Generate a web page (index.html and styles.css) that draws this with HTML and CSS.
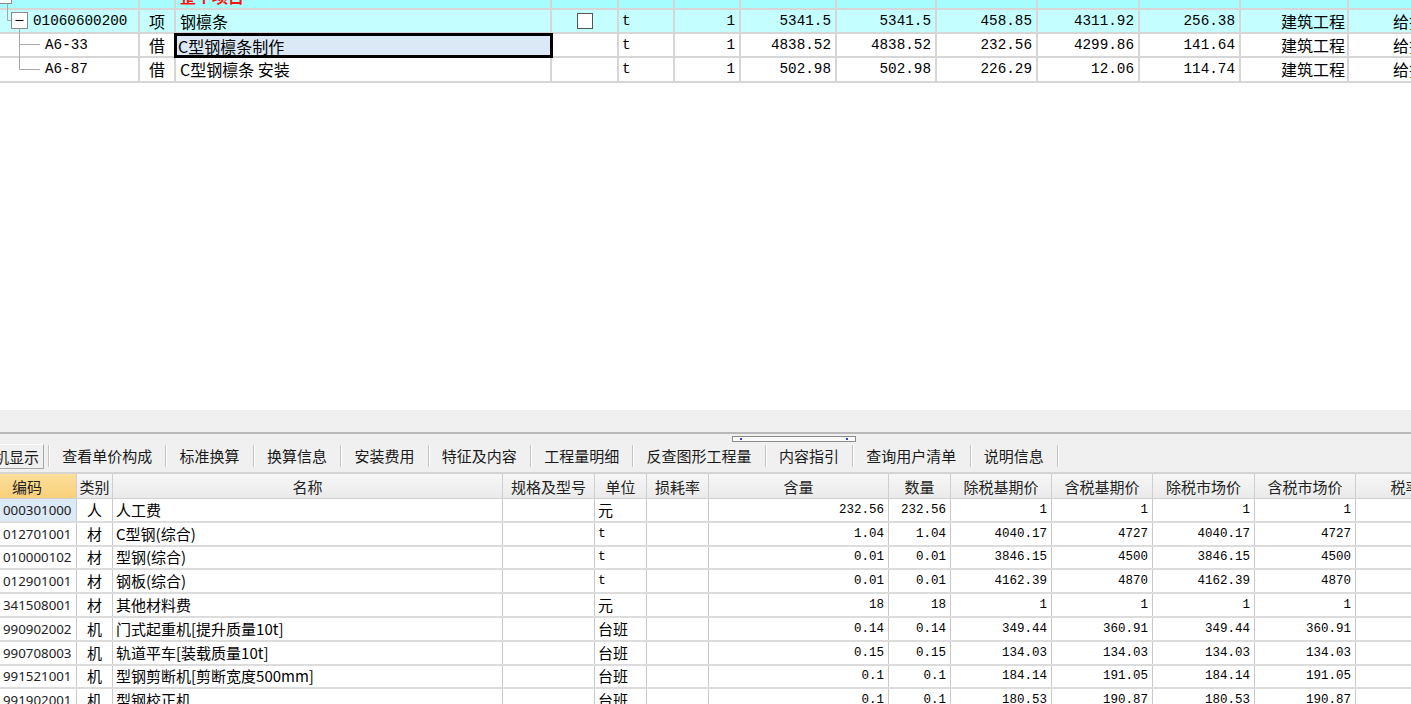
FILE: index.html
```html
<!DOCTYPE html>
<html lang="zh-CN">
<head>
<meta charset="utf-8">
<title>分部分项</title>
<link rel="stylesheet" href="styles.css">
</head>
<body>
<div class="app">
  <section class="top-pane">
    <svg class="tree" width="44" height="84" viewBox="0 0 44 84">
      <rect x="-4.5" y="-12.5" width="16" height="16" fill="#fff" stroke="#8a8a8a"/>
      <path d="M7.5 3.5V20.5H11.5" fill="none" stroke="#a8a8a8"/>
      <rect x="11.5" y="12.5" width="16" height="16" fill="#fff" stroke="#8a8a8a"/>
      <path d="M15.5 20.5H23.5" stroke="#000"/>
      <path d="M19.5 28.5V69.5M19.5 44.5H40M19.5 69.5H40" fill="none" stroke="#a8a8a8"/>
    </svg>
    <div class="grid-top">
      <div class="trow root">
        <div class="c"></div>
        <div class="c"></div>
        <div class="c cjk red">整个项目</div>
        <div class="c"></div>
        <div class="c"></div>
        <div class="c"></div>
        <div class="c num"></div>
        <div class="c num red">5341.50</div>
        <div class="c num red">458.85</div>
        <div class="c num red">4311.92</div>
        <div class="c num red">256.38</div>
        <div class="c"></div>
        <div class="c last"></div>
      </div>
      <div class="trow item">
        <div class="c mono code-l1">01060600200</div>
        <div class="c cjk center">项</div>
        <div class="c cjk">钢檩条</div>
        <div class="c center"><span class="check"></span></div>
        <div class="c mono unit">t</div>
        <div class="c num">1</div>
        <div class="c num">5341.5</div>
        <div class="c num">5341.5</div>
        <div class="c num">458.85</div>
        <div class="c num">4311.92</div>
        <div class="c num">256.38</div>
        <div class="c cjk right">建筑工程</div>
        <div class="c cjk last">给排水工程</div>
      </div>
      <div class="trow">
        <div class="c mono code-l2">A6-33</div>
        <div class="c cjk center">借</div>
        <div class="c cjk selected">C型钢檩条制作</div>
        <div class="c"></div>
        <div class="c mono unit">t</div>
        <div class="c num">1</div>
        <div class="c num">4838.52</div>
        <div class="c num">4838.52</div>
        <div class="c num">232.56</div>
        <div class="c num">4299.86</div>
        <div class="c num">141.64</div>
        <div class="c cjk right">建筑工程</div>
        <div class="c cjk last">给排水工程</div>
      </div>
      <div class="trow">
        <div class="c mono code-l2">A6-87</div>
        <div class="c cjk center">借</div>
        <div class="c cjk">C型钢檩条 安装</div>
        <div class="c"></div>
        <div class="c mono unit">t</div>
        <div class="c num">1</div>
        <div class="c num">502.98</div>
        <div class="c num">502.98</div>
        <div class="c num">226.29</div>
        <div class="c num">12.06</div>
        <div class="c num">114.74</div>
        <div class="c cjk right">建筑工程</div>
        <div class="c cjk last">给排水工程</div>
      </div>
    </div>
  </section>

  <div class="band"></div>

  <nav class="tabs">
    <span class="grip"><i></i><i></i></span>
    <span class="tab active">人材机显示</span>
    <span class="sep"></span>
    <span class="tab">查看单价构成</span>
    <span class="sep"></span>
    <span class="tab">标准换算</span>
    <span class="sep"></span>
    <span class="tab">换算信息</span>
    <span class="sep"></span>
    <span class="tab">安装费用</span>
    <span class="sep"></span>
    <span class="tab">特征及内容</span>
    <span class="sep"></span>
    <span class="tab">工程量明细</span>
    <span class="sep"></span>
    <span class="tab">反查图形工程量</span>
    <span class="sep"></span>
    <span class="tab">内容指引</span>
    <span class="sep"></span>
    <span class="tab">查询用户清单</span>
    <span class="sep"></span>
    <span class="tab">说明信息</span>
    <span class="sep"></span>
  </nav>

  <div class="grid-bottom">
    <div class="brow head">
      <div class="h h-code">编码</div>
      <div class="h">类别</div>
      <div class="h">名称</div>
      <div class="h">规格及型号</div>
      <div class="h">单位</div>
      <div class="h">损耗率</div>
      <div class="h">含量</div>
      <div class="h">数量</div>
      <div class="h">除税基期价</div>
      <div class="h">含税基期价</div>
      <div class="h">除税市场价</div>
      <div class="h">含税市场价</div>
      <div class="h">税率</div>
    </div>
    <div class="brow">
      <div class="d code cur">000301000</div><div class="d kind">人</div><div class="d name">人工费</div><div class="d"></div><div class="d unitb">元</div><div class="d"></div>
      <div class="d n">232.56</div><div class="d n">232.56</div><div class="d n">1</div><div class="d n">1</div><div class="d n">1</div><div class="d n">1</div><div class="d"></div>
    </div>
    <div class="brow">
      <div class="d code">012701001</div><div class="d kind">材</div><div class="d name">C型钢(综合)</div><div class="d"></div><div class="d unitb mono-s">t</div><div class="d"></div>
      <div class="d n">1.04</div><div class="d n">1.04</div><div class="d n">4040.17</div><div class="d n">4727</div><div class="d n">4040.17</div><div class="d n">4727</div><div class="d"></div>
    </div>
    <div class="brow">
      <div class="d code">010000102</div><div class="d kind">材</div><div class="d name">型钢(综合)</div><div class="d"></div><div class="d unitb mono-s">t</div><div class="d"></div>
      <div class="d n">0.01</div><div class="d n">0.01</div><div class="d n">3846.15</div><div class="d n">4500</div><div class="d n">3846.15</div><div class="d n">4500</div><div class="d"></div>
    </div>
    <div class="brow">
      <div class="d code">012901001</div><div class="d kind">材</div><div class="d name">钢板(综合)</div><div class="d"></div><div class="d unitb mono-s">t</div><div class="d"></div>
      <div class="d n">0.01</div><div class="d n">0.01</div><div class="d n">4162.39</div><div class="d n">4870</div><div class="d n">4162.39</div><div class="d n">4870</div><div class="d"></div>
    </div>
    <div class="brow">
      <div class="d code">341508001</div><div class="d kind">材</div><div class="d name">其他材料费</div><div class="d"></div><div class="d unitb">元</div><div class="d"></div>
      <div class="d n">18</div><div class="d n">18</div><div class="d n">1</div><div class="d n">1</div><div class="d n">1</div><div class="d n">1</div><div class="d"></div>
    </div>
    <div class="brow">
      <div class="d code">990902002</div><div class="d kind">机</div><div class="d name">门式起重机[提升质量10t]</div><div class="d"></div><div class="d unitb">台班</div><div class="d"></div>
      <div class="d n">0.14</div><div class="d n">0.14</div><div class="d n">349.44</div><div class="d n">360.91</div><div class="d n">349.44</div><div class="d n">360.91</div><div class="d"></div>
    </div>
    <div class="brow">
      <div class="d code">990708003</div><div class="d kind">机</div><div class="d name">轨道平车[装载质量10t]</div><div class="d"></div><div class="d unitb">台班</div><div class="d"></div>
      <div class="d n">0.15</div><div class="d n">0.15</div><div class="d n">134.03</div><div class="d n">134.03</div><div class="d n">134.03</div><div class="d n">134.03</div><div class="d"></div>
    </div>
    <div class="brow">
      <div class="d code">991521001</div><div class="d kind">机</div><div class="d name">型钢剪断机[剪断宽度500mm]</div><div class="d"></div><div class="d unitb">台班</div><div class="d"></div>
      <div class="d n">0.1</div><div class="d n">0.1</div><div class="d n">184.14</div><div class="d n">191.05</div><div class="d n">184.14</div><div class="d n">191.05</div><div class="d"></div>
    </div>
    <div class="brow">
      <div class="d code">991902001</div><div class="d kind">机</div><div class="d name">型钢校正机</div><div class="d"></div><div class="d unitb">台班</div><div class="d"></div>
      <div class="d n">0.1</div><div class="d n">0.1</div><div class="d n">180.53</div><div class="d n">190.87</div><div class="d n">180.53</div><div class="d n">190.87</div><div class="d"></div>
    </div>
  </div>
</div>
</body>
</html>
```

FILE: styles.css
```css
html, body {
  margin: 0;
  padding: 0;
}

body {
  width: 1411px;
  height: 704px;
  overflow: hidden;
  background: #ffffff;
  color: #000;
  font-family: "Noto Sans CJK SC", "Noto Sans", sans-serif;
}

.app {
  display: flex;
  flex-direction: column;
  height: 704px;
  width: 1411px;
  overflow: hidden;
}

/* ---------- top grid ---------- */
.top-pane {
  position: relative;
  flex: none;
  height: 410px;
  overflow: hidden;
  background: #fff;
}

.tree {
  position: absolute;
  left: 0;
  top: 0;
  z-index: 2;
}

.grid-top {
  margin-top: -14.8px;
}

.trow {
  display: grid;
  grid-template-columns: 140px 36px 376px 67px 56px 66px 96px 100px 101px 102px 101px 108px 220px;
  height: 24.33px;
  box-sizing: border-box;
  border-bottom: 2px solid #d6d6d6;
  background: #fff;
}

.trow.root {
  background: #a6fdfd;
}

.trow.item {
  background: #c4fefe;
}

.c {
  box-sizing: border-box;
  border-right: 2px solid #d6d6d6;
  display: flex;
  align-items: center;
  padding: 0 4px;
  overflow: hidden;
  white-space: nowrap;
  font-size: 16px;
  line-height: 20px;
}

.c.last {
  border-right: 0;
  padding-left: 44px;
}

.cjk {
  font-size: 16px;
}

.mono,
.num {
  font-family: "Liberation Mono", "DejaVu Sans Mono", monospace;
  font-size: 14.3px;
}

.num {
  justify-content: flex-end;
}

.right {
  justify-content: flex-end;
  padding-right: 2px;
}

.center {
  justify-content: center;
}

.red {
  color: #ff1010;
  font-weight: bold;
}

.code-l1 {
  padding-left: 33px;
}

.code-l2 {
  padding-left: 45px;
}

.unit {
  padding-left: 3px;
}

.selected {
  background: #dbe9f6;
  border: 3px solid #000;
  margin: -1px -1px -2px -2px;
  padding-left: 1px;
  position: relative;
  z-index: 1;
}

.check {
  width: 14px;
  height: 14px;
  border: 1px solid #555;
  background: #fff;
  margin-left: 1px;
}

/* ---------- splitter band ---------- */
.band {
  flex: none;
  height: 22px;
  background: #f0f0f0;
}

/* ---------- tabs ---------- */
.tabs {
  position: relative;
  flex: none;
  display: flex;
  align-items: center;
  height: 42px;
  box-sizing: border-box;
  border-top: 2px solid #b9b9b9;
  border-bottom: 2px solid #d4d4d4;
  background: #f0f0f0;
  font-size: 15px;
  color: #1a1a1a;
  padding-top: 6px;
}

.grip {
  position: absolute;
  left: 732px;
  top: 2px;
  width: 124px;
  height: 6px;
  box-sizing: border-box;
  border: 1px solid #8c8c8c;
  background: #fafafa;
}

.grip i {
  position: absolute;
  top: 1px;
  width: 2px;
  height: 2px;
  background: #3c3cd8;
}

.grip i:first-child {
  left: 7px;
}

.grip i:last-child {
  right: 7px;
}

.tab {
  padding: 0 13.2px;
  line-height: 22px;
  white-space: nowrap;
}

.tab.active {
  margin-left: -43px;
  padding: 1px 4px 0 6px;
  border: 1px solid;
  border-color: #ffffff #a8a8a8 #a8a8a8 #ffffff;
  margin-right: 4px;
}

.sep {
  width: 1px;
  height: 22px;
  background: #c4c4c4;
  box-shadow: 1px 0 0 #fff;
}

/* ---------- bottom grid ---------- */
.grid-bottom {
  flex: none;
}

.brow {
  display: grid;
  grid-template-columns: 77px 36px 390px 92px 52px 62px 180px 62px 101px 101px 102px 101px 100px;
  height: 23.8px;
  box-sizing: border-box;
  border-bottom: 2px solid #dcdcdc;
}

.brow.head {
  height: 25px;
  border-bottom: 1px solid #d0d0d0;
  background: linear-gradient(#f7f7f7, #eaeaea);
}

.h {
  box-sizing: border-box;
  border-right: 1px solid #cfcfcf;
  display: flex;
  align-items: center;
  justify-content: center;
  font-size: 15px;
  color: #222;
  white-space: nowrap;
  overflow: hidden;
}

.h-code {
  justify-content: flex-start;
  padding-left: 12px;
  background: linear-gradient(#fbdf9a, #f8d07a);
}

.d {
  box-sizing: border-box;
  border-right: 1px solid #c9c9c9;
  display: flex;
  align-items: center;
  white-space: nowrap;
  overflow: hidden;
  font-size: 15px;
  line-height: 20px;
}

.d.code {
  font-family: "Noto Sans", sans-serif;
  font-size: 13.3px;
  color: #222;
  padding-left: 3px;
}

.d.cur {
  background: #dce9f6;
}

.d.kind {
  justify-content: center;
}

.d.name {
  padding-left: 3px;
}

.d.unitb {
  padding-left: 3px;
}

.mono-s {
  font-family: "Liberation Mono", "DejaVu Sans Mono", monospace;
  font-size: 13px;
}

.d.n {
  justify-content: flex-end;
  padding-right: 4px;
  font-family: "Liberation Mono", "DejaVu Sans Mono", monospace;
  font-size: 12.5px;
}
```
